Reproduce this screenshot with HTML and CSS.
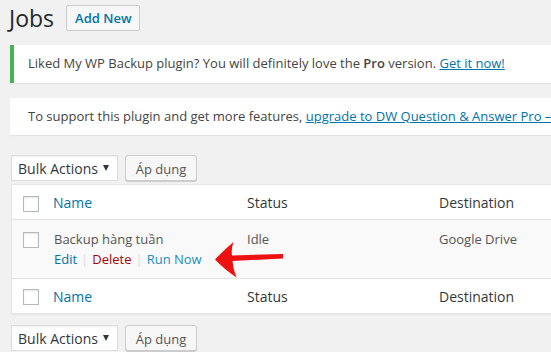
FILE: index.html
```html
<!DOCTYPE html>
<html lang="vi">
<head>
<meta charset="utf-8">
<title>Jobs</title>
<link rel="stylesheet" href="styles.css">
</head>
<body>
<div class="wrap">
  <div class="page-head">
    <h1 class="page-title">Jobs</h1>
    <a class="page-title-action" href="#">Add New</a>
  </div>

  <div class="notice notice-success">
    <p>Liked My WP Backup plugin? You will definitely love the <strong>Pro</strong> version. <a href="#">Get it now!</a></p>
  </div>

  <div class="notice">
    <p>To support this plugin and get more features, <a href="#">upgrade to DW Question &amp; Answer Pro – only $49</a></p>
  </div>

  <div class="tablenav tablenav-top">
    <span class="select">Bulk Actions<span class="caret"></span></span>
    <button class="button" type="button">Áp dụng</button>
  </div>

  <table class="list-table">
    <thead>
      <tr>
        <td class="check-column"><span class="checkbox"></span></td>
        <th class="col-name"><a href="#">Name</a></th>
        <th class="col-status">Status</th>
        <th class="col-dest">Destination</th>
      </tr>
    </thead>
    <tbody>
      <tr class="alt">
        <td class="check-column check-body"><span class="checkbox"></span></td>
        <td class="col-name">
          <div class="row-title">Backup hàng tuần</div>
          <div class="row-actions">
            <a href="#">Edit</a><span class="sep">|</span><a class="delete" href="#">Delete</a><span class="sep">|</span><a class="run" href="#">Run Now</a>
          </div>
        </td>
        <td class="col-status">Idle</td>
        <td class="col-dest">Google Drive</td>
      </tr>
    </tbody>
    <tfoot>
      <tr>
        <td class="check-column check-foot"><span class="checkbox"></span></td>
        <th class="col-name"><a href="#">Name</a></th>
        <th class="col-status">Status</th>
        <th class="col-dest">Destination</th>
      </tr>
    </tfoot>
  </table>

  <div class="tablenav tablenav-bottom">
    <span class="select">Bulk Actions<span class="caret"></span></span>
    <button class="button" type="button">Áp dụng</button>
  </div>
</div>

<svg class="arrow" width="80" height="45" viewBox="0 0 80 45" aria-hidden="true">
  <path d="M5 21.5 Q14 12 23.5 4 Q21 11 22 17.5 L73 16 L73 20.5 L22.5 23 Q23 31 26.5 39.5 Q14 31 5 21.5 Z" fill="#ee1111"/>
</svg>
</body>
</html>
```

FILE: styles.css
```css
html, body {
  margin: 0;
  padding: 0;
}

body {
  background: #f1f1f1;
  color: #444;
  font-family: "Open Sans", "Noto Sans", sans-serif;
  font-size: 13px;
  line-height: 1.4;
  overflow: hidden;
  width: 551px;
  height: 352px;
  position: relative;
}

a {
  color: #0073aa;
}

.wrap {
  width: 900px;
  padding: 5px 0 0 10px;
}

.page-head {
  display: flex;
  align-items: center;
  height: 26px;
}

.page-title {
  margin: 0 12px 0 -1px;
  font-size: 23px;
  font-weight: 400;
  line-height: 26px;
  color: #23282d;
}

.page-title-action {
  display: inline-block;
  height: 24px;
  line-height: 24px;
  padding: 0 8px;
  border: 1px solid #ccc;
  border-radius: 2px;
  background: #f7f7f7;
  font-size: 13px;
  font-weight: 600;
  color: #0073aa;
  text-decoration: none;
}

.notice {
  margin: 14px 0 0 0;
  padding: 1px 12px;
  background: #fff;
  border-left: 4px solid #fff;
  box-shadow: 0 1px 1px rgba(0, 0, 0, 0.06);
  white-space: nowrap;
}

.notice + .notice {
  margin-top: 15px;
}

.notice-success {
  border-left-color: #46b450;
}

.notice p {
  margin: 6px 0;
  padding: 2px;
  font-size: 13px;
  line-height: 1.5;
}

.notice strong {
  font-weight: 600;
}

.tablenav {
  display: flex;
  align-items: center;
  gap: 7px;
  height: 26px;
  padding-left: 1px;
}

.tablenav-top {
  margin-top: 20px;
  margin-bottom: 3px;
}

.tablenav-bottom {
  margin-top: 11px;
}

.select {
  display: flex;
  align-items: center;
  box-sizing: border-box;
  width: 107px;
  height: 26px;
  padding: 2px 0 0 6px;
  border: 1px solid #ddd;
  background: #fff;
  box-shadow: inset 0 1px 2px rgba(0, 0, 0, 0.07);
  font-size: 14px;
  color: #32373c;
}

.caret {
  width: 0;
  height: 0;
  margin-left: auto;
  margin-right: 8px;
  margin-top: -2px;
  border-left: 3px solid transparent;
  border-right: 3px solid transparent;
  border-top: 6px solid #32373c;
}

.button {
  box-sizing: border-box;
  width: 72px;
  height: 26px;
  padding: 1px 0 0;
  border: 1px solid #ccc;
  border-radius: 3px;
  background: #f7f7f7;
  box-shadow: 0 1px 0 #ccc;
  font-family: "Open Sans", "Noto Sans", sans-serif;
  font-size: 13px;
  color: #555;
  line-height: 22px;
}

.list-table {
  width: 880px;
  margin-left: 1px;
  border: 1px solid #e5e5e5;
  border-spacing: 0;
  background: #fff;
  box-shadow: 0 1px 1px rgba(0, 0, 0, 0.04);
  table-layout: fixed;
}

.list-table th,
.list-table td {
  text-align: left;
  vertical-align: top;
  font-weight: 400;
}

.list-table thead th,
.list-table tfoot th {
  padding: 8px 10px 6px;
  font-size: 14px;
  line-height: 20px;
  color: #32373c;
}

.list-table thead th,
.list-table thead td {
  border-bottom: 1px solid #e1e1e1;
}

.list-table tfoot th,
.list-table tfoot td {
  border-top: 1px solid #e1e1e1;
}

.list-table th a {
  text-decoration: none;
}

.list-table tbody td {
  padding: 10px 10px 9px;
  font-size: 13px;
  line-height: 1.5;
  color: #555;
}

.list-table tbody tr.alt {
  background: #f9f9f9;
}

.list-table .check-column {
  width: 20px;
  padding: 11px 0 0 11px;
}

.list-table tbody .check-body {
  padding: 12px 0 0 11px;
}

.list-table .check-foot {
  padding-top: 10px;
}

.col-name {
  width: 174px;
}

.col-status {
  width: 172px;
}

.row-title {
  padding-left: 1px;
}

.checkbox {
  display: block;
  box-sizing: border-box;
  width: 16px;
  height: 16px;
  border: 1px solid #b4b9be;
  background: #fff;
  box-shadow: inset 0 1px 2px rgba(0, 0, 0, 0.1);
}

.row-actions {
  padding-top: 0;
  padding-left: 1px;
  white-space: nowrap;
}

.row-actions a {
  text-decoration: none;
  color: #0073aa;
}

.row-actions a.delete {
  color: #a00;
}

.row-actions a.run {
  color: #1e8cbe;
}

.row-actions .sep {
  color: #ddd;
  margin: 0 4px;
}

.arrow {
  position: absolute;
  left: 210px;
  top: 238px;
}
```
